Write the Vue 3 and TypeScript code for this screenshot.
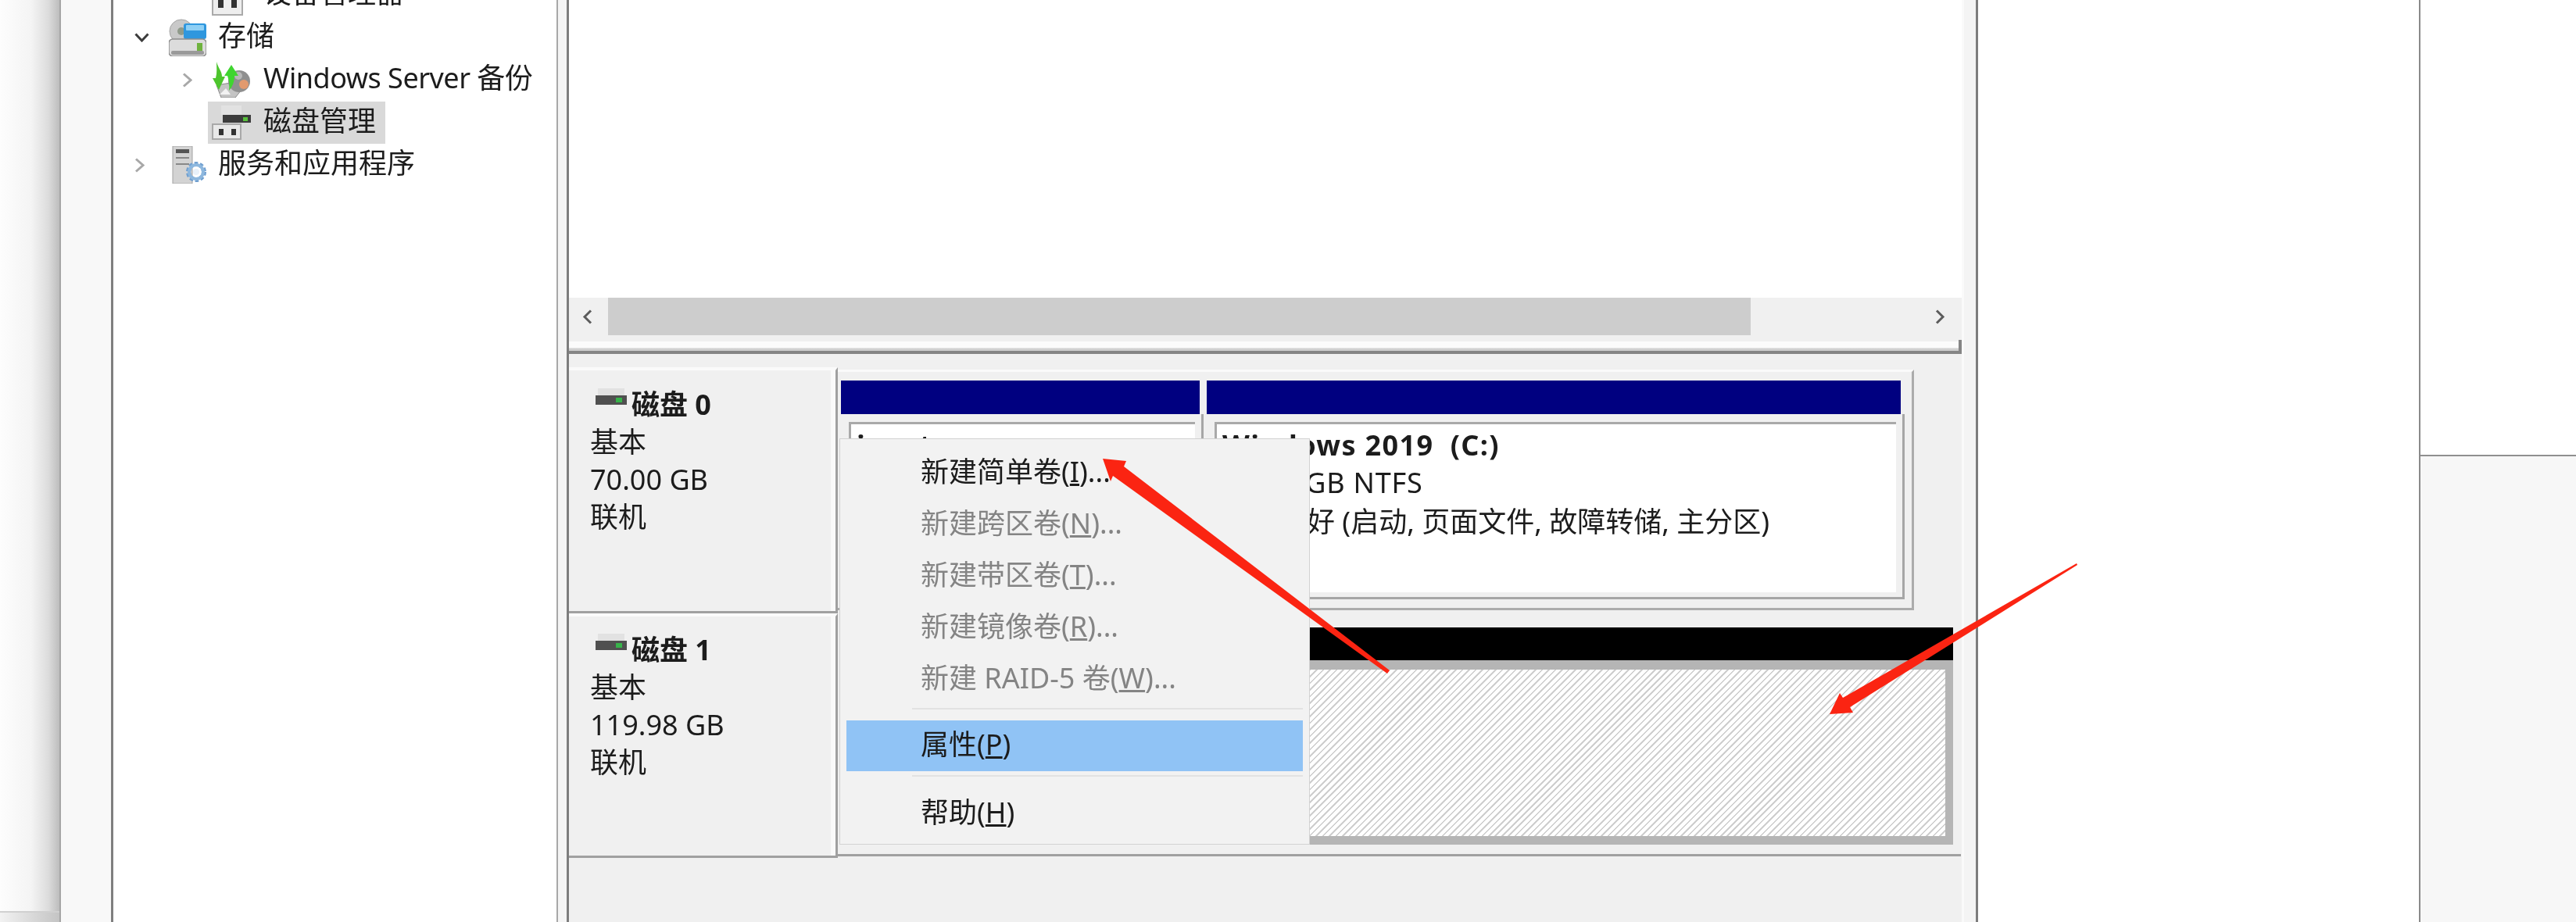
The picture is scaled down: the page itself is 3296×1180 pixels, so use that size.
<template>
  <div class="page">
    <div class="shadow-gutter"><div class="gutter-foot"></div></div>
    <div class="frame-strip"></div>

    <!-- tree on the left -->
    <aside class="tree">
      <div v-for="row in treeRows" :key="row.label" class="tree-row" :class="'depth-' + row.depth">
        <span class="chevron-box">
          <svg v-if="row.toggle === 'open'" width="19" height="12" viewBox="0 0 19 12">
            <path d="M1.5 1.5 9.5 10 17.5 1.5" fill="none" stroke="#3c3c3c" stroke-width="3" />
          </svg>
          <svg v-else-if="row.toggle === 'closed'" width="13" height="19" viewBox="0 0 13 19">
            <path d="M2 1.5 11 9.5 2 17.5" fill="none" stroke="#a8a8a8" stroke-width="3" />
          </svg>
        </span>
        <span class="tree-node" :class="{ selected: row.selected }">
          <span class="tree-icon">
            <!-- device manager, only its foot is on screen -->
            <svg v-if="row.icon === 'device'" width="40" height="54" viewBox="0 0 40 54">
              <rect x="1" y="14" width="38" height="39" fill="#eee" stroke="#aaa" stroke-width="2" />
              <rect x="8" y="30" width="7" height="14" fill="#333" />
              <rect x="25" y="30" width="7" height="14" fill="#333" />
            </svg>
            <!-- storage: disc, blue screen, drive -->
            <svg v-else-if="row.icon === 'storage'" width="48" height="48" viewBox="0 0 48 48">
              <circle cx="16" cy="16" r="15" fill="#c9c9c9" stroke="#a5a5a5" />
              <circle cx="16" cy="16" r="5" fill="#8f9a8a" />
              <rect x="19" y="6" width="29" height="20" rx="3" fill="#2f97de" />
              <rect x="22" y="8" width="23" height="7" rx="1" fill="#8fd0f5" />
              <rect x="0" y="26" width="48" height="22" rx="5" fill="#dcdcdc" stroke="#8d8d8d" stroke-width="1.5" />
              <rect x="36" y="31" width="7" height="11" fill="#6fb33e" />
              <rect x="3" y="41" width="42" height="5" rx="2" fill="#9a9a9a" />
            </svg>
            <!-- backup: green arrows over a disc -->
            <svg v-else-if="row.icon === 'backup'" width="50" height="46" viewBox="0 0 50 46">
              <path d="M6 30 12 46H30L38 36 30 26Z" fill="#c4c4c4" stroke="#8a8a8a" />
              <path d="M10 42 18 34 24 42Z" fill="#f2f2f2" />
              <circle cx="35" cy="25" r="14" fill="#8f8f8f" />
              <circle cx="41" cy="29" r="6" fill="#e29a6e" />
              <circle cx="34" cy="18" r="5" fill="#b8b8b8" />
              <path d="M6 0C8 8 13 12 13 19L17 19 9 36 1 21 5 21C7 14 6 7 6 0Z" fill="#4dc52d" />
              <path d="M25 4 34 18 29 18C29 25 27 31 22 37 23 29 22 24 20 18L16 18Z" fill="#3fd52f" />
            </svg>
            <!-- disk management -->
            <svg v-else-if="row.icon === 'disk'" width="50" height="44" viewBox="0 0 50 44">
              <rect x="12" y="0" width="26" height="12" fill="#e2e2e2" />
              <rect x="14" y="12" width="36" height="10" fill="#3c3c3c" />
              <rect x="40" y="15" width="6" height="5" fill="#58c13c" />
              <rect x="1" y="24" width="36" height="19" fill="#e9e9e9" stroke="#a9a9a9" stroke-width="2" />
              <rect x="9" y="30" width="6" height="8" fill="#333" />
              <rect x="25" y="30" width="6" height="8" fill="#333" />
            </svg>
            <!-- services: tower and gear -->
            <svg v-else width="48" height="48" viewBox="0 0 48 48">
              <rect x="5" y="0" width="25" height="48" fill="#d3d3d3" stroke="#a2a2a2" />
              <rect x="9" y="4" width="17" height="5" fill="#555" />
              <rect x="9" y="14" width="17" height="2" fill="#888" />
              <rect x="9" y="22" width="17" height="2" fill="#888" />
              <circle cx="35" cy="33" r="10" fill="none" stroke="#6f9fd0" stroke-width="6" stroke-dasharray="4 2.4" />
              <circle cx="35" cy="33" r="9" fill="none" stroke="#8db7de" stroke-width="4" />
              <circle cx="35" cy="33" r="4" fill="#e8f1fa" />
            </svg>
          </span>
          <span class="tree-label" :class="{ tight: row.tight }">{{ row.label }}</span>
        </span>
      </div>
    </aside>

    <div class="thin-rule"></div>
    <div class="split-strip"></div>
    <div class="split-bar"></div>

    <!-- disk management pane -->
    <main class="main">
      <div class="list-pane"></div>
      <div class="scrollbar">
        <span class="scroll-btn">
          <svg width="13" height="19" viewBox="0 0 13 19"><path d="M11 1.5 3 9.5 11 17.5" fill="none" stroke="#5c5c5c" stroke-width="3" /></svg>
        </span>
        <span class="scroll-thumb"></span>
        <span class="scroll-end">
          <svg width="13" height="19" viewBox="0 0 13 19"><path d="M2 1.5 10 9.5 2 17.5" fill="none" stroke="#5c5c5c" stroke-width="3" /></svg>
        </span>
      </div>
      <div class="pane-split"></div>

      <div class="disks">
        <section v-for="disk in disks" :key="disk.name" class="disk-row" :class="disk.rowClass">
          <div class="disk-label">
            <div class="disk-head">
              <svg width="40" height="23" viewBox="0 0 40 23">
                <rect x="3" y="0" width="34" height="9" fill="#e2e2e2" />
                <rect x="0" y="9" width="40" height="12" fill="#505050" />
                <rect x="26" y="12" width="8" height="6" fill="#37b34a" />
              </svg>
              <b>{{ disk.name }}</b>
            </div>
            <div>基本</div>
            <div>{{ disk.size }}</div>
            <div>联机</div>
          </div>

          <div v-if="disk.rowClass === 'row-0'" class="vol-frame">
            <div class="volume vol-first">
              <div class="vol-bar"></div>
              <div class="vol-body"><div class="vol-inner"><b>input</b></div></div>
            </div>
            <div class="volume vol-second">
              <div class="vol-bar"></div>
              <div class="vol-body">
                <div class="vol-inner">
                  <b class="vol-name">Windows 2019&nbsp; (C:)</b>
                  <div class="vol-size">69.51 GB NTFS</div>
                  <div class="vol-state">状态良好 (启动, 页面文件, 故障转储, 主分区)</div>
                </div>
              </div>
            </div>
          </div>

          <div v-else class="vol-free">
            <div class="free-bar"></div>
            <div class="free-body"><div class="hatch"></div></div>
          </div>
        </section>
      </div>
    </main>

    <div class="right-strip"></div>
    <div class="split-bar"></div>
    <div class="doc"></div>
    <div class="doc-rule"></div>
    <div class="side">
      <div class="side-top"></div>
      <div class="side-bottom"></div>
    </div>

    <!-- context menu -->
    <div class="menu">
      <template v-for="item in menuItems" :key="item.key">
        <div v-if="item.sep" class="menu-sep" :class="item.sep"></div>
        <div class="menu-item" :class="{ disabled: item.disabled, active: item.active }">
          {{ item.text }}(<u>{{ item.key }}</u>){{ item.tail }}
        </div>
      </template>
    </div>

    <!-- red arrows drawn on the screenshot -->
    <svg class="marks" width="3296" height="1180" viewBox="0 0 3296 1180">
      <polygon points="1411,587 1441,590 1438,597 1778,858 1775,862 1424,609 1421,616" fill="#fb2412" />
      <polygon points="2341,914 2354,887 2358,893 2657,721 2658,723 2367,905 2371,912" fill="#fb2412" />
    </svg>
  </div>
</template>

<script setup lang="ts">
interface TreeRow {
  label: string
  depth: number
  icon: string
  toggle?: 'open' | 'closed'
  selected?: boolean
  tight?: boolean
}

interface MenuItem {
  text: string
  key: string
  tail: string
  disabled?: boolean
  active?: boolean
  sep?: string
}

const treeRows: TreeRow[] = [
  { label: '设备管理器', depth: 1, icon: 'device' },
  { label: '存储', depth: 0, icon: 'storage', toggle: 'open' },
  { label: 'Windows Server 备份', depth: 1, icon: 'backup', toggle: 'closed', tight: true },
  { label: '磁盘管理', depth: 1, icon: 'disk', selected: true },
  { label: '服务和应用程序', depth: 0, icon: 'services', toggle: 'closed' }
]

const disks = [
  { name: '磁盘 0', size: '70.00 GB', rowClass: 'row-0' },
  { name: '磁盘 1', size: '119.98 GB', rowClass: 'row-1' }
]

const menuItems: MenuItem[] = [
  { text: '新建简单卷', key: 'I', tail: '...' },
  { text: '新建跨区卷', key: 'N', tail: '...', disabled: true },
  { text: '新建带区卷', key: 'T', tail: '...', disabled: true },
  { text: '新建镜像卷', key: 'R', tail: '...', disabled: true },
  { text: '新建 RAID-5 卷', key: 'W', tail: '...', disabled: true },
  { text: '属性', key: 'P', tail: '', active: true, sep: 'sep-a' },
  { text: '帮助', key: 'H', tail: '', sep: 'sep-b' }
]
</script>

<style scoped>
.page {
  position: relative;
  display: flex;
  width: 3296px;
  height: 1180px;
  overflow: hidden;
  background: #fff;
  color: #1c1c1c;
  font-family: "Noto Sans", "Noto Sans CJK SC", sans-serif;
  font-size: 36px;
  line-height: 48px;
  filter: blur(0.7px);
}

.shadow-gutter {
  position: relative;
  width: 76px;
  flex: none;
  background: linear-gradient(to right, #fdfdfd 0, #f4f4f4 40px, #dcdcdc 62px, #bdbdbd 76px);
  border-right: 2px solid #a6a6a6;
}

.gutter-foot {
  position: absolute;
  left: 0;
  right: 0;
  bottom: 0;
  height: 12px;
  border-top: 2px solid #d0d0d0;
  background: linear-gradient(to right, #f2f2f2, #c4c4c4);
}

.frame-strip {
  width: 64px;
  flex: none;
  background: #f8f8f8;
}

.tree {
  width: 567px;
  flex: none;
  border-left: 3px solid #7f7f7f;
  padding-top: 1px;
  overflow: hidden;
  background: #fff;
}

.tree-row {
  display: flex;
  align-items: center;
  height: 54.5px;
}

.tree-row:first-child {
  margin-top: -35px;
}

.depth-0 {
  padding-left: 27px;
}

.depth-1 {
  padding-left: 88px;
}

.chevron-box {
  display: flex;
  flex: none;
  align-items: center;
}

.depth-0 .chevron-box {
  width: 39px;
}

.depth-1 .chevron-box {
  width: 33px;
}

.tree-node {
  display: flex;
  align-items: center;
  height: 54px;
  padding: 0 12px 0 5px;
}

.tree-node.selected {
  background: #d9d9d9;
}

.tree-icon {
  display: flex;
  flex: none;
  align-items: center;
}

.depth-0 .tree-icon {
  width: 63px;
}

.depth-1 .tree-icon {
  width: 66px;
}

.tree-label {
  white-space: nowrap;
  padding-bottom: 4px;
}

.tree-label.tight {
  letter-spacing: -0.5px;
}

.thin-rule {
  width: 2px;
  flex: none;
  background: #a8a8a8;
}

.split-strip {
  width: 11px;
  flex: none;
  background: #f4f4f4;
}

.split-bar {
  width: 3px;
  flex: none;
  background: #7d7d7d;
}

.main {
  display: flex;
  flex-direction: column;
  width: 1782px;
  flex: none;
  background: #f0f0f0;
}

.list-pane {
  height: 381px;
  flex: none;
  background: #fff;
}

.scrollbar {
  display: flex;
  align-items: stretch;
  height: 48px;
  flex: none;
  background: #f0f0f0;
}

.scroll-btn {
  display: flex;
  align-items: center;
  width: 50px;
  flex: none;
  padding-left: 17px;
  box-sizing: border-box;
}

.scroll-thumb {
  width: 1462px;
  flex: none;
  background: #cdcdcd;
}

.scroll-end {
  display: flex;
  flex: 1;
  align-items: center;
  justify-content: flex-end;
  padding-right: 21px;
}

.pane-split {
  position: relative;
  height: 20px;
  flex: none;
  background: linear-gradient(to bottom, #f0f0f0 0, #f0f0f0 8px, #fbfbfb 8px, #fbfbfb 16px, #d0d0d0 17px);
  border-bottom: 4px solid #858585;
}

.pane-split::after {
  content: "";
  position: absolute;
  right: 0;
  bottom: 0;
  width: 4px;
  height: 14px;
  background: #858585;
}

.disks {
  padding-top: 17px;
  display: flex;
  flex-direction: column;
}

.disk-row {
  display: flex;
}

.row-0 {
  height: 315px;
}

.row-1 {
  height: 313px;
}

.disk-label {
  width: 344px;
  flex: none;
  box-sizing: border-box;
  padding-left: 27px;
  background: #f0f0f0;
  border-top: 4px solid #fafafa;
  border-right: 3px solid #a0a0a0;
  border-bottom: 3px solid #a0a0a0;
  box-shadow: inset -6px 0 0 #fafafa;
}

.row-0 .disk-label {
  padding-top: 20px;
}

.row-1 .disk-label {
  padding-top: 19px;
}

.disk-head {
  display: flex;
  align-items: center;
  gap: 6px;
}

.disk-head svg {
  margin: 0 0 20px 7px;
}

.vol-frame {
  display: flex;
  flex: none;
  width: 1377px;
  height: 308px;
  margin-top: 3px;
  box-sizing: border-box;
  padding: 11px 9px 11px 4px;
  gap: 4px;
  border-top: 3px solid #fafafa;
  border-right: 3px solid #acacac;
  border-bottom: 3px solid #acacac;
}

.volume {
  display: flex;
  flex-direction: column;
  flex: none;
}

.vol-first {
  width: 464px;
}

.vol-second {
  width: 893px;
}

.vol-bar {
  height: 43px;
  margin-right: 5px;
  flex: none;
  background: #000080;
}

.vol-body {
  flex: 1;
  display: flex;
  padding: 10px 8px 6px 10px;
  border-right: 3px solid #a6a6a6;
  border-bottom: 3px solid #a6a6a6;
  min-height: 0;
}

.vol-inner {
  flex: 1;
  box-sizing: border-box;
  padding: 3px 0 0 7px;
  background: #fff;
  border-top: 3px solid #a9a9a9;
  border-left: 3px solid #a9a9a9;
  white-space: nowrap;
  overflow: hidden;
}

.vol-inner b {
  display: block;
}

.vol-name {
  letter-spacing: 1.35px;
}

.vol-size {
  letter-spacing: 0.8px;
}

.vol-state {
  margin-top: 2px;
}

.vol-free {
  display: flex;
  flex: none;
  flex-direction: column;
  width: 1437px;
  height: 311px;
  box-sizing: border-box;
  padding: 18px 10px 0 4px;
  border-bottom: 3px solid #a0a0a0;
}

.free-bar {
  height: 42px;
  flex: none;
  background: #000;
}

.free-body {
  height: 236px;
  flex: none;
  box-sizing: border-box;
  padding: 12px 10px 11px 10px;
  background: #b5b5b5;
}

.hatch {
  height: 100%;
  background: repeating-linear-gradient(-45deg, #fff 0, #fff 4.2px, #cfcfcf 4.2px, #cfcfcf 6px);
}

.right-strip {
  width: 15px;
  flex: none;
  background: #f4f4f4;
  border-left: 3px solid #fafafa;
}

.doc {
  width: 564px;
  flex: none;
  background: #fff;
}

.doc-rule {
  width: 2px;
  flex: none;
  background: #8a8a8a;
}

.side {
  display: flex;
  flex: 1;
  flex-direction: column;
}

.side-top {
  height: 582px;
  flex: none;
  background: #fff;
  border-bottom: 2px solid #8f8f8f;
}

.side-bottom {
  flex: 1;
  background: #f7f7f7;
}

.menu {
  position: absolute;
  left: 1074px;
  top: 561px;
  width: 602px;
  height: 520px;
  box-sizing: border-box;
  padding-top: 11px;
  background: #f2f2f2;
  border: 1px solid #d2d2d2;
}

.menu-item {
  display: flex;
  align-items: center;
  height: 66px;
  margin: 0 8px;
  padding-left: 95px;
  padding-bottom: 4px;
  box-sizing: border-box;
  white-space: pre-wrap;
}

.menu-item.disabled {
  color: #848484;
}

.menu-item.active {
  background: #90c3f5;
  height: 65px;
}

.menu-sep {
  position: relative;
}

.menu-sep::after {
  content: "";
  position: absolute;
  left: 92px;
  right: 8px;
  height: 2px;
  background: #e2e2e2;
}

.sep-a {
  height: 19px;
}

.sep-a::after {
  top: 3px;
}

.sep-b {
  height: 22px;
}

.sep-b::after {
  top: 5px;
}

.marks {
  position: absolute;
  left: 0;
  top: 0;
  pointer-events: none;
}
</style>
